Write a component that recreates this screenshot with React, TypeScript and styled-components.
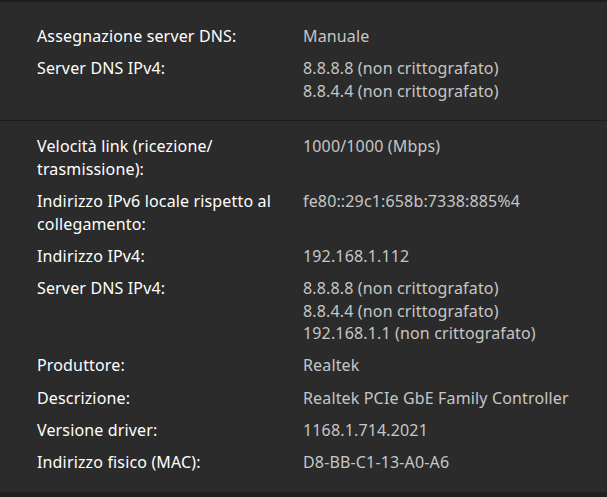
import React from "react";
import styled, { createGlobalStyle } from "styled-components";

const GlobalStyle = createGlobalStyle`
    html, body {
        margin: 0;
        padding: 0;
        background: #202020;
    }
    body {
        font-family: "Noto Sans", "Open Sans", sans-serif;
        -webkit-font-smoothing: antialiased;
    }
`;

const Page = styled.div`
    width: 607px;
    height: 497px;
    background: #202020;
    display: flex;
    flex-direction: column;
    overflow: hidden;
`;

const Card = styled.div`
    background: #2b2b2b;
    border-top: 2px solid #1d1d1d;
    display: flex;
    flex-direction: column;
`;

const Section = styled.div<{ $top: number; $bottom: number; $divider?: boolean }>`
    display: grid;
    grid-template-columns: 250px 1fr;
    column-gap: 16px;
    row-gap: 9.8px;
    padding: ${(p) => p.$top}px 16px ${(p) => p.$bottom}px 37px;
    border-top: ${(p) => (p.$divider ? "1px solid #1d1d1d" : "none")};
`;

const Label = styled.div`
    color: #ffffff;
    font-size: 16px;
    letter-spacing: 0.15px;
    line-height: 22.5px;
`;

const Value = styled.div`
    color: #c6c6c6;
    font-size: 16px;
    letter-spacing: 0.15px;
    line-height: 22.5px;
`;

type Row = { label: string; values: string[] };

const dnsRows: Row[] = [
    { label: "Assegnazione server DNS:", values: ["Manuale"] },
    {
        label: "Server DNS IPv4:",
        values: ["8.8.8.8 (non crittografato)", "8.8.4.4 (non crittografato)"],
    },
];

const adapterRows: Row[] = [
    { label: "Velocità link (ricezione/ trasmissione):", values: ["1000/1000 (Mbps)"] },
    {
        label: "Indirizzo IPv6 locale rispetto al collegamento:",
        values: ["fe80::29c1:658b:7338:885%4"],
    },
    { label: "Indirizzo IPv4:", values: ["192.168.1.112"] },
    {
        label: "Server DNS IPv4:",
        values: [
            "8.8.8.8 (non crittografato)",
            "8.8.4.4 (non crittografato)",
            "192.168.1.1 (non crittografato)",
        ],
    },
    { label: "Produttore:", values: ["Realtek"] },
    { label: "Descrizione:", values: ["Realtek PCIe GbE Family Controller"] },
    { label: "Versione driver:", values: ["1168.1.714.2021"] },
    { label: "Indirizzo fisico (MAC):", values: ["D8-BB-C1-13-A0-A6"] },
];

const renderRows = (rows: Row[]) =>
    rows.map((row) => (
        <React.Fragment key={row.label}>
            <Label>{row.label}</Label>
            <Value>
                {row.values.map((v) => (
                    <div key={v}>{v}</div>
                ))}
            </Value>
        </React.Fragment>
    ));

const App = () => {
    return (
        <Page>
            <GlobalStyle />
            <Card>
                <Section $top={23} $bottom={18}>
                    {renderRows(dnsRows)}
                </Section>
                <Section $top={14} $bottom={18} $divider>
                    {renderRows(adapterRows)}
                </Section>
            </Card>
        </Page>
    );
};

export default App;
